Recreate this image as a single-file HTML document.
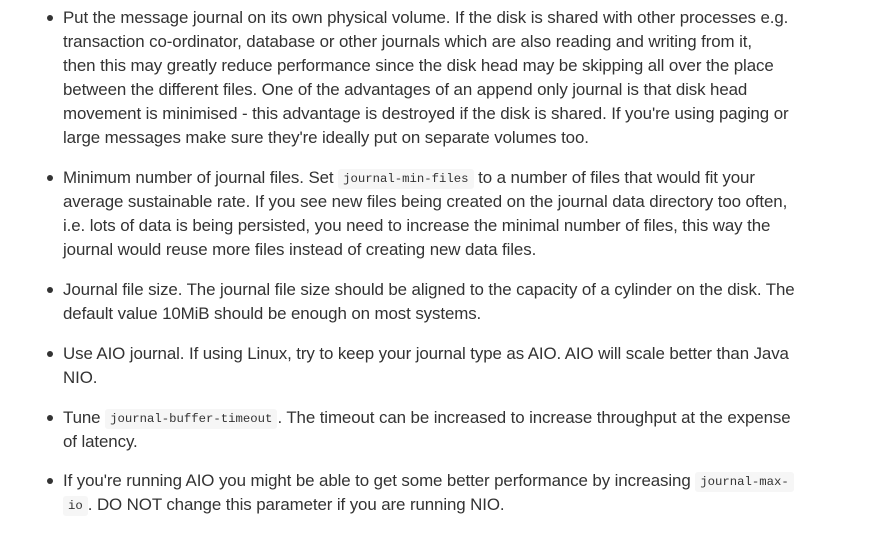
<!DOCTYPE html>
<html><head><style>
body{margin:0;background:#fff;color:#333;font-family:"Liberation Sans",sans-serif;font-size:16.9px;}
ul{margin:0;padding:0;list-style:none;position:absolute;left:63px;top:6px;width:800px}
li{position:relative;line-height:24px;height:auto;margin-bottom:15.9px;white-space:nowrap;letter-spacing:-0.1px}
li:before{content:"";position:absolute;left:-16px;top:9px;width:6px;height:6px;border-radius:50%;background:#333}
code{font-family:"Liberation Mono",monospace;font-size:12.3px;line-height:1;background:#f6f6f6;padding:3px 5px;border-radius:3px;letter-spacing:0;vertical-align:1px}
</style></head><body>
<ul>
<li>Put the message journal on its own physical volume. If the disk is shared with other processes e.g.<br>transaction co-ordinator, database or other journals which are also reading and writing from it,<br>then this may greatly reduce performance since the disk head may be skipping all over the place<br>between the different files. One of the advantages of an append only journal is that disk head<br>movement is minimised - this advantage is destroyed if the disk is shared. If you're using paging or<br>large messages make sure they're ideally put on separate volumes too.</li>
<li>Minimum number of journal files. Set <code>journal-min-files</code> to a number of files that would fit your<br>average sustainable rate. If you see new files being created on the journal data directory too often,<br>i.e. lots of data is being persisted, you need to increase the minimal number of files, this way the<br>journal would reuse more files instead of creating new data files.</li>
<li>Journal file size. The journal file size should be aligned to the capacity of a cylinder on the disk. The<br>default value 10MiB should be enough on most systems.</li>
<li>Use AIO journal. If using Linux, try to keep your journal type as AIO. AIO will scale better than Java<br>NIO.</li>
<li>Tune <code>journal-buffer-timeout</code>. The timeout can be increased to increase throughput at the expense<br>of latency.</li>
<li>If you're running AIO you might be able to get some better performance by increasing <code>journal-max-</code><br><code>io</code>. DO NOT change this parameter if you are running NIO.</li>
</ul>
</body></html>
